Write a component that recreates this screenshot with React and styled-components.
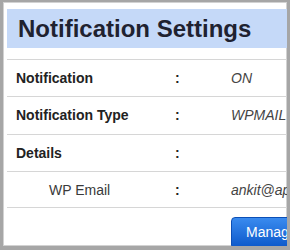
import React from "react";
import styled, { createGlobalStyle } from "styled-components";

const Global = createGlobalStyle`
  html, body { margin: 0; padding: 0; background: #ffffff; }
  body { font-family: "Liberation Sans", Arial, sans-serif; }
`;

const Frame = styled.div`
  width: 290px;
  height: 250px;
  box-sizing: border-box;
  border-style: solid;
  border-color: #a6a6a6;
  border-width: 2px 3px 4px 3px;
  box-shadow: inset 1px 1px 0 #d2d2d2, inset -1px -1px 0 #d2d2d2;
  background: #ffffff;
  overflow: hidden;
  padding: 7px 0 0 4px;
`;

const Panel = styled.div`
  width: 420px;
`;

const Header = styled.div`
  height: 39px;
  background: #c5d9f8;
  display: flex;
  align-items: center;
  padding-left: 11px;
`;

const Title = styled.h2`
  margin: 0;
  font-size: 24px;
  font-weight: 700;
  color: #1f2230;
  line-height: 1;
`;

const Table = styled.div`
  margin-top: 11px;
  display: flex;
  flex-direction: column;
`;

const Row = styled.div`
  display: grid;
  grid-template-columns: 159px 56px 1fr;
  align-items: center;
  height: 37.33px;
  box-sizing: border-box;
  border-top: 1px solid #d6d6d6;
  border-bottom: ${(p) => (p.$last ? "1px solid #d6d6d6" : "none")};
  padding-left: 9px;
  font-size: 14px;
`;

const Label = styled.div`
  font-weight: ${(p) => (p.$sub ? 400 : 700)};
  color: ${(p) => (p.$sub ? "#3a3a3a" : "#222222")};
  padding-left: ${(p) => (p.$sub ? "33px" : "0")};
  white-space: nowrap;
`;

const Colon = styled.div`
  color: #222222;
  font-weight: 700;
`;

const Value = styled.div`
  font-style: italic;
  color: #444444;
  white-space: nowrap;
`;

const Footer = styled.div`
  display: grid;
  grid-template-columns: 159px 56px 1fr;
  padding-left: 9px;
  margin-top: 9px;
`;

const Button = styled.button`
  grid-column: 3;
  justify-self: start;
  font-family: "Liberation Sans", Arial, sans-serif;
  font-size: 14px;
  line-height: 16px;
  color: #ffffff;
  background: linear-gradient(#3a8bef, #0b57c9);
  border: 1px solid #0c4fb6;
  border-radius: 4px;
  padding: 6px 14px 8px 14px;
  white-space: nowrap;
`;

const rows = [
  { label: "Notification", value: "ON" },
  { label: "Notification Type", value: "WPMAIL" },
  { label: "Details", value: "" },
  { label: "WP Email", value: "ankit@apps.com", sub: true },
];

export default function App() {
  return (
    <>
      <Global />
      <Frame>
        <Panel>
          <Header>
            <Title>Notification Settings</Title>
          </Header>
          <Table>
            {rows.map((r, i) => (
              <Row key={r.label} $last={i === rows.length - 1}>
                <Label $sub={r.sub}>{r.label}</Label>
                <Colon>:</Colon>
                <Value>{r.value}</Value>
              </Row>
            ))}
          </Table>
          <Footer>
            <Button>Manage Settings</Button>
          </Footer>
        </Panel>
      </Frame>
    </>
  );
}
